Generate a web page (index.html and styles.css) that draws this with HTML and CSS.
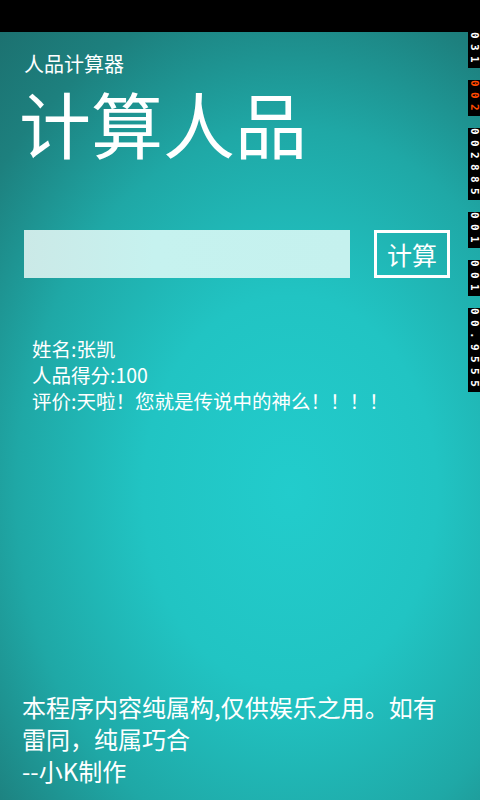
FILE: index.html
```html
<!DOCTYPE html>
<html lang="zh-CN">
<head>
<meta charset="utf-8">
<title>人品计算器</title>
<link rel="stylesheet" href="styles.css">
</head>
<body>
<div class="status-bar"></div>
<main class="page">
  <div class="app-title">人品计算器</div>
  <h1 class="page-title">计算人品</h1>
  <div class="input-row">
    <div class="text-box"></div>
    <button class="calc-btn">计算</button>
  </div>
  <div class="result">
    <div>姓名:张凯</div>
    <div>人品得分:100</div>
    <div>评价:天啦！您就是传说中的神么！！！！</div>
  </div>
  <div class="footer">本程序内容纯属构,仅供娱乐之用。如有雷同，纯属巧合<br>--小K制作</div>
</main>
<div class="counters">
  <span class="counter c1">031</span>
  <span class="counter c2 warn">002</span>
  <span class="counter c3">002885</span>
  <span class="counter c4">001</span>
  <span class="counter c5">001</span>
  <span class="counter c6">00.9555</span>
</div>
</body>
</html>
```
FILE: styles.css
```css
html, body {
  margin: 0;
  padding: 0;
}
body {
  width: 480px;
  height: 800px;
  overflow: hidden;
  position: relative;
  background: #000;
  font-family: "Noto Sans CJK SC", "Noto Sans", sans-serif;
  color: #fff;
}
.status-bar {
  height: 32px;
  background: #000;
}
.page {
  height: 768px;
  box-sizing: border-box;
  display: flex;
  flex-direction: column;
  padding: 18px 0 13px 0;
  background:
    radial-gradient(ellipse 420px 560px at 290px 460px, #22cccc 0%, #21c4c3 35%, #1fa8a6 65%, #1d807e 90%, #1c6f6e 110%);
}
.app-title {
  font-size: 20px;
  line-height: 28px;
  padding-left: 24px;
}
.page-title {
  margin: 4px 0 0 0;
  font-weight: normal;
  font-size: 72px;
  line-height: 80px;
  padding-left: 19px;
}
.input-row {
  display: flex;
  gap: 24px;
  margin-top: 68px;
  padding-left: 24px;
}
.text-box {
  width: 326px;
  height: 48px;
  background: linear-gradient(90deg, #cbe9e7 0%, #c6f2ef 40%, #c5f1ee 100%);
}
.calc-btn {
  width: 76px;
  height: 48px;
  box-sizing: border-box;
  border: 3px solid #fff;
  background: transparent;
  color: #fff;
  font-family: inherit;
  font-size: 25px;
  line-height: 1;
  padding: 0;
}
.result {
  margin-top: 58px;
  padding-left: 32px;
  font-size: 19.5px;
  line-height: 26px;
}
.footer {
  margin-top: auto;
  padding-left: 22px;
  width: 430px;
  font-size: 24px;
  line-height: 32px;
}
.counters {
  position: absolute;
  top: 32px;
  right: 0;
  width: 12px;
}
.counter {
  position: absolute;
  left: 0;
  width: 12px;
  background: #000;
  color: #fff;
  writing-mode: vertical-rl;
  text-orientation: sideways;
  font-family: "DejaVu Sans Mono", monospace;
  font-weight: bold;
  font-size: 11px;
  line-height: 12px;
  letter-spacing: 5.4px;
}
.counter.warn { color: #ff4a00; }
.c1 { top: 0; }
.c2 { top: 48px; }
.c3 { top: 96px; }
.c4 { top: 180px; }
.c5 { top: 228px; }
.c6 { top: 276px; }
```
